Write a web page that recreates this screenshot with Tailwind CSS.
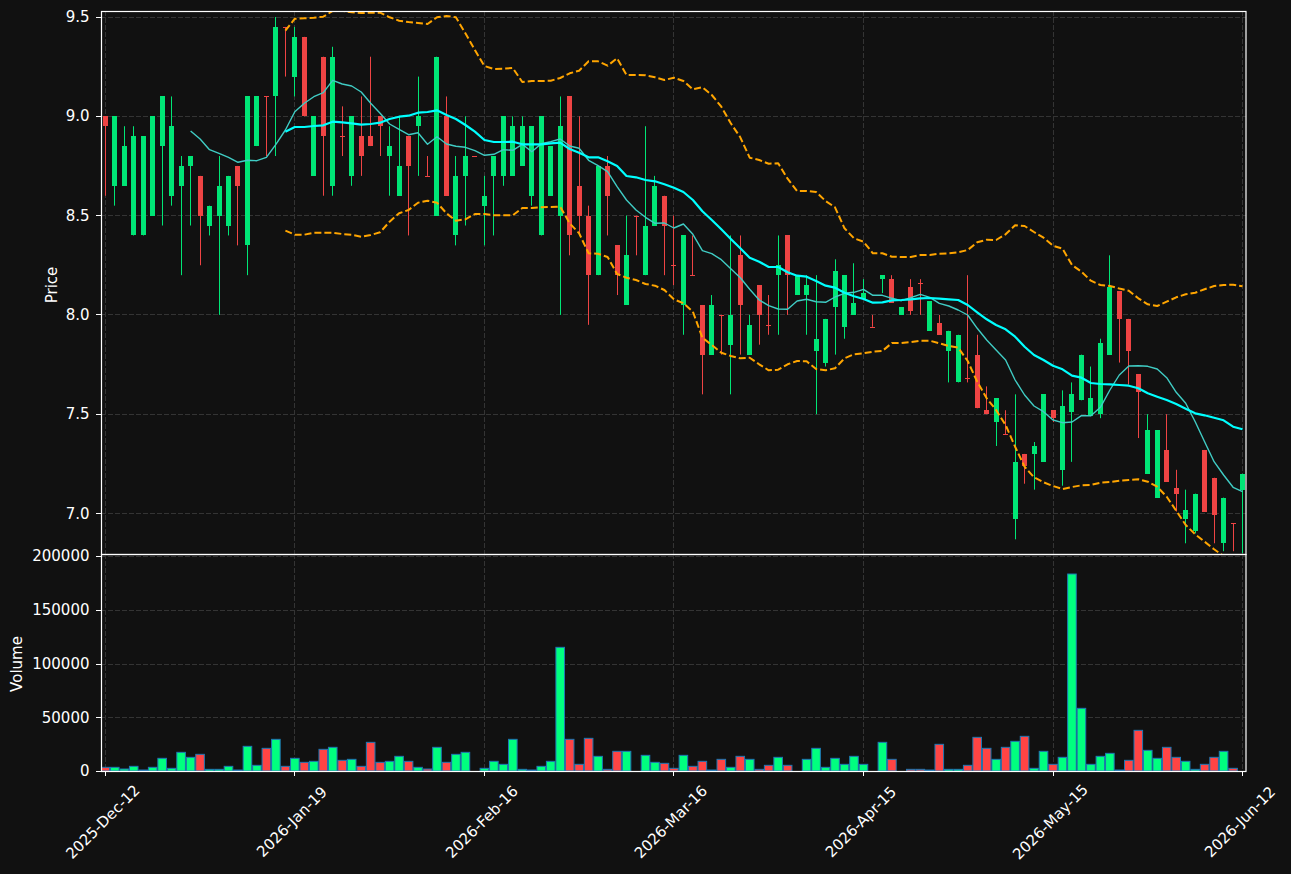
<!DOCTYPE html>
<html lang="en">
<head>
    <meta charset="UTF-8">
    <title>Price and Volume Chart</title>
    <script src="https://cdn.jsdelivr.net/npm/@tailwindcss/browser@4"></script>
</head>
<body class="bg-[#111111] font-['DejaVu_Sans',sans-serif]">
    <div class="flex flex-col w-[1291px] h-[874px] overflow-hidden bg-[#111111]">
        <!-- Price panel -->
        <svg id="pricePanel" class="block shrink-0 w-[1291px] h-[554px] overflow-visible fill-white text-[15px]" viewBox="0 0 1291 554">
            <defs>
                <clipPath id="priceClip"><rect x="101" y="11" width="1145" height="543"></rect></clipPath>
            </defs>
            <g id="priceGrid"></g>
            <g id="candles" clip-path="url(#priceClip)"></g>
            <g id="lines" clip-path="url(#priceClip)"></g>
            <g id="priceFrame"></g>
            <g text-anchor="end" dominant-baseline="central">
                <text x="89.5" y="17">9.5</text>
                <text x="89.5" y="116.3">9.0</text>
                <text x="89.5" y="215.5">8.5</text>
                <text x="89.5" y="314.5">8.0</text>
                <text x="89.5" y="414.3">7.5</text>
                <text x="89.5" y="513.5">7.0</text>
            </g>
            <text text-anchor="middle" dominant-baseline="central" transform="translate(52 285) rotate(-90)">Price</text>
        </svg>

        <!-- Volume panel -->
        <svg id="volumePanel" class="block shrink-0 w-[1291px] h-[320px] overflow-visible fill-white text-[15px]" viewBox="0 554 1291 320">
            <defs>
                <clipPath id="volumeClip"><rect x="101" y="554" width="1145" height="217.5"></rect></clipPath>
            </defs>
            <g id="volumeGrid"></g>
            <g id="bars" clip-path="url(#volumeClip)"></g>
            <g id="volumeFrame"></g>
            <g text-anchor="end" dominant-baseline="central">
                <text x="89.5" y="556">200000</text>
                <text x="89.5" y="610">150000</text>
                <text x="89.5" y="664">100000</text>
                <text x="89.5" y="717.5">50000</text>
                <text x="89.5" y="771">0</text>
            </g>
            <text text-anchor="middle" dominant-baseline="central" transform="translate(17 664) rotate(-90)">Volume</text>
            <g text-anchor="middle" dominant-baseline="central">
                <text transform="translate(103 822) rotate(-45)">2025-Dec-12</text>
                <text transform="translate(292 822) rotate(-45)">2026-Jan-19</text>
                <text transform="translate(482 822) rotate(-45)">2026-Feb-16</text>
                <text transform="translate(671 822) rotate(-45)">2026-Mar-16</text>
                <text transform="translate(861 822) rotate(-45)">2026-Apr-15</text>
                <text transform="translate(1050.5 822) rotate(-45)">2026-May-15</text>
                <text transform="translate(1240 822) rotate(-45)">2026-Jun-12</text>
            </g>
        </svg>
    </div>

    <script>
        const GREEN = '#00e676';
        const RED = '#ef4444';
        const GRID = '#343434';

        // [colour, body top, body bottom, high, low]
        const candles = [
            ['r',9.0,8.95,9.0,8.6],['g',9.0,8.65,9.0,8.55],['g',8.85,8.65,8.95,8.65],['g',8.9,8.4,8.95,8.4],
            ['g',8.9,8.4,8.9,8.4],['g',9.0,8.5,9.0,8.5],['g',9.1,8.85,9.1,8.45],['g',8.95,8.6,9.1,8.55],
            ['g',8.75,8.65,8.8,8.2],['g',8.8,8.75,8.8,8.45],['r',8.7,8.5,8.7,8.25],['g',8.55,8.45,8.55,8.4],
            ['g',8.65,8.5,8.8,8.0],['g',8.7,8.45,8.7,8.4],['r',8.75,8.65,8.75,8.35],['g',9.1,8.35,9.1,8.2],
            ['g',9.1,8.85,9.1,8.85],['r',9.1,9.1,9.1,8.8],['g',9.45,9.1,9.5,8.8],['r',9.45,9.45,9.45,9.2],
            ['g',9.4,9.2,9.45,9.1],['r',9.4,9.0,9.4,9.0],['g',9.0,8.7,9.0,8.7],['r',9.3,8.9,9.3,8.6],
            ['g',9.3,8.65,9.35,8.6],['r',8.9,8.9,9.05,8.8],['g',9.0,8.7,9.0,8.65],['r',8.9,8.8,9.1,8.7],
            ['r',8.9,8.85,9.3,8.85],['r',9.0,8.95,9.0,8.8],['g',8.85,8.8,8.95,8.6],['g',8.75,8.6,9.0,8.6],
            ['r',8.9,8.75,8.9,8.4],['g',9.0,8.95,9.2,8.7],['r',8.7,8.7,8.8,8.7],['g',9.3,8.5,9.3,8.5],
            ['r',9.0,8.6,9.1,8.6],['g',8.7,8.4,8.8,8.35],['g',8.8,8.7,9.0,8.45],['r',8.8,8.8,8.8,8.8],
            ['g',8.6,8.55,8.7,8.35],['g',8.8,8.7,8.8,8.4],['g',9.0,8.7,9.0,8.65],['g',8.95,8.7,9.0,8.7],
            ['g',8.95,8.75,9.0,8.75],['g',8.95,8.6,8.95,8.55],['g',9.0,8.4,9.0,8.4],['g',8.85,8.6,8.85,8.6],
            ['g',8.95,8.5,9.1,8.0],['r',9.1,8.4,9.1,8.3],['r',8.65,8.5,9.0,8.4],['r',8.5,8.2,8.55,7.95],
            ['g',8.75,8.2,8.75,8.2],['r',8.75,8.6,8.8,8.4],['r',8.35,8.2,8.35,8.1],['g',8.3,8.05,8.5,8.05],
            ['r',8.5,8.5,8.5,8.3],['g',8.45,8.2,8.95,8.2],['g',8.65,8.45,8.7,8.45],['r',8.6,8.45,8.6,8.2],
            ['r',8.25,8.25,8.5,8.15],['g',8.4,8.05,8.4,7.9],['r',8.2,8.2,8.4,8.2],['r',8.05,7.8,8.05,7.6],
            ['g',8.05,7.8,8.1,7.8],['r',8.0,8.0,8.0,7.8],['g',8.0,7.85,8.4,7.6],['r',8.3,8.05,8.4,7.8],
            ['g',7.95,7.8,8.0,7.8],['r',8.15,8.0,8.15,7.85],['r',7.95,7.95,8.1,7.9],['g',8.25,8.2,8.4,7.9],
            ['r',8.4,8.2,8.4,8.0],['g',8.2,8.1,8.2,8.1],['g',8.15,8.1,8.2,7.9],['g',7.88,7.82,8.2,7.5],
            ['g',7.98,7.76,7.98,7.74],['g',8.22,8.04,8.28,7.8],['g',8.2,7.94,8.2,7.88],['g',8.06,8.0,8.26,8.0],
            ['g',8.11,8.08,8.18,8.08],['r',7.94,7.94,8.0,7.94],['g',8.2,8.18,8.2,8.11],['r',8.18,8.06,8.2,8.06],
            ['g',8.04,8.0,8.04,8.0],['r',8.14,8.02,8.18,8.0],['r',8.16,8.16,8.18,8.0],['g',8.07,7.92,8.07,7.92],
            ['r',7.96,7.9,8.0,7.9],['g',7.92,7.82,7.92,7.66],['g',7.9,7.66,7.9,7.66],['r',7.68,7.68,8.2,7.66],
            ['r',7.8,7.53,7.9,7.53],['r',7.52,7.5,7.64,7.5],['g',7.58,7.46,7.58,7.34],['r',7.4,7.4,7.52,7.4],
            ['g',7.26,6.97,7.6,6.87],['r',7.3,7.24,7.3,7.15],['g',7.34,7.3,7.36,7.12],['g',7.6,7.26,7.6,7.26],
            ['r',7.52,7.48,7.52,7.46],['g',7.54,7.22,7.62,7.14],['g',7.6,7.51,7.66,7.26],['g',7.8,7.57,7.8,7.57],
            ['g',7.58,7.49,7.74,7.49],['g',7.86,7.5,7.88,7.48],['g',8.14,7.8,8.3,7.8],['r',8.12,7.98,8.12,7.76],
            ['r',7.98,7.82,7.98,7.65],['r',7.7,7.61,7.7,7.38],['g',7.42,7.2,7.5,7.2],['g',7.42,7.08,7.42,7.08],
            ['r',7.32,7.16,7.5,7.16],['r',7.13,7.1,7.22,7.01],['g',7.02,6.97,7.12,6.85],['g',7.1,6.91,7.1,6.9],
            ['r',7.32,7.01,7.32,7.01],['r',7.18,6.99,7.18,6.85],['g',7.08,6.85,7.08,6.81],['r',6.95,6.95,6.95,6.81],
            ['g',7.2,7.12,7.2,6.8]
        ];

        // Bar heights in thirds of a pixel, one per candle
        const volumeHeights = [
            11,11,6,14,3,11,38,8,56,41,50,5,5,14,3,74,17,68,95,14,38,26,29,65,71,32,35,14,86,26,29,44,29,11,6,
            71,26,50,56,0,8,29,20,95,5,3,14,29,371,95,20,98,44,5,59,59,0,47,26,23,8,47,14,29,3,35,11,44,35,5,17,41,17,0,
            35,68,11,38,20,44,20,0,86,35,0,5,5,3,80,5,5,17,101,68,35,71,89,104,8,59,20,41,591,188,20,44,53,3,32,122,62,38,
            71,41,29,5,20,41,59,8,0
        ];

        // Moving averages and bands, pixel y per candle from index 19 (thin line from index 9)
        const maSlow = [131.7,127,127,126,125.3,121.7,122.3,123.3,124.7,124,122.7,119,116.7,115.7,112.7,112,110.3,115,119,125,131.7,140,142,142,141.7,144.3,144.3,144.3,143.3,142.7,149,152.7,157.3,157.3,161.3,166,176,177.3,180,181.3,184.3,187.7,192,200,211.3,220,229.3,239,248.3,257.7,261.7,267,267,272.3,275.7,276.7,281,285.7,287.7,292.7,296.3,299,302.7,302.3,300.3,300,299.3,298.3,298,298.7,299.3,300,305,312.3,319.3,325,329.3,336.7,346.7,355,360,365.7,369.3,375.7,377.7,383,384,384.3,385,385.7,388.3,393.3,396.7,400,404,408.7,413.3,415.3,417.7,420.3,426.7,429.3];
        const maFast = [131,139,149.7,153.3,157.3,162.3,160.3,160.7,157.3,144.3,130,111.7,103.3,96.7,92.7,80.3,84,86,92,103.3,113.3,124,129.3,134.7,132.7,144.3,136.7,144,146.3,147.3,150.7,155.3,154.3,149.7,150.3,144.3,151.7,143.7,141.7,139,146,148.3,160.3,165.7,171.7,186.7,200,210,217.3,223.3,223,228,224,234.3,250.7,253.7,259.7,268.7,277.7,289.3,300,305.7,309,309.3,301,299.3,301.7,302.3,297,293.3,292.3,289.3,295.3,295.3,298.3,300.7,297.7,294.3,297.3,303.3,306,310,315,328.3,340,350,360,380,395,406,411.7,420,422.7,422,415.7,415.7,407.3,390,375,366,365.7,366.3,369,377.7,392.3,403.3,421.7,441.7,461.7,475,487.3,491.7];
        const upperBand = [30.7,18.7,18.3,17.7,16.7,11,10.7,12.3,13,12.7,12.7,17.3,20.7,22,23,24,17.3,16,17.3,33.3,50,66,69,68.7,68,82,81,81,80.7,78,73.3,70.7,61.3,61.3,65.7,58.3,75,75,75.3,77.3,80,77.7,81,89.3,87.3,95,106.7,123.3,137.3,157.7,160,163.7,163.3,178.7,191,191,192,201,207.3,228.3,238.3,241.7,253.3,253.3,256.7,257,257,255,255,253.7,253.3,252.3,250,242.3,239.7,240,234.3,225.3,226,232,237.7,245.7,248.7,265,271.7,280.7,285,286,288.5,290.7,298.3,304.3,306,301.7,297.3,294.3,292.7,289.3,286,285,284.7,286.3];
        const lowerBand = [230.7,234.7,234.7,232.7,232.7,232.7,234,234.7,236.7,235,232.3,221.7,213.3,210,202.7,200.7,202.7,213.3,220.7,219.3,214,214,215.3,215.3,215.3,208,208,207.3,207,206.7,223.3,233.3,253.3,253.7,257,274,277.7,280,284,285.7,290,299.3,303.3,311.7,337.7,345,352.7,356,358.3,357.7,364.3,370.3,369.7,364.3,361,361.3,369,370.3,368.3,358.3,354.3,353.3,351.7,351,343,343,342,340.7,340.7,343.3,346,347.7,361,381.7,398.3,410,425,446.7,466.7,477.3,482.3,486,489,487,485.3,485,482.7,482,480.7,480,479.3,481.7,486.7,496.7,510.7,525,534.3,541.7,549.3,556,565,573.3];

        const xAt = i => 105.3 + 9.477 * i;
        const priceY = p => 17 + (9.5 - p) * 198.6;

        function add(parent, tag, attrs) {
            const node = document.createElementNS('http://www.w3.org/2000/svg', tag);
            Object.keys(attrs).forEach(k => node.setAttribute(k, attrs[k]));
            parent.appendChild(node);
            return node;
        }

        function drawAxes(gridId, frameId, top, bottom, yTicks) {
            const grid = document.getElementById(gridId);
            const frame = document.getElementById(frameId);
            yTicks.forEach(y => {
                const py = Math.floor(y) + 0.5;
                add(grid, 'line', { x1: 101, x2: 1246, y1: py, y2: py, stroke: GRID, 'stroke-dasharray': '5 2' });
                add(frame, 'line', { x1: 96, x2: 101, y1: py, y2: py, stroke: '#fff' });
            });
            [0, 20, 40, 60, 80, 100, 120].forEach(i => {
                const px = Math.floor(xAt(i)) + 0.5;
                add(grid, 'line', { x1: px, x2: px, y1: top, y2: bottom, stroke: GRID, 'stroke-dasharray': '5 2' });
            });
            add(frame, 'rect', { x: 101.5, y: top + 0.5, width: 1144.5, height: bottom - top, fill: 'none', stroke: '#fff', 'stroke-width': 1.2 });
        }

        // Price panel
        drawAxes('priceGrid', 'priceFrame', 11, 554, [17, 116.3, 215.5, 314.5, 414.3, 513.5]);

        const candleGroup = document.getElementById('candles');
        candles.forEach((c, i) => {
            const color = c[0] === 'g' ? GREEN : RED;
            const x = xAt(i);
            const wickX = Math.floor(x) + 0.5;
            add(candleGroup, 'line', { x1: wickX, x2: wickX, y1: priceY(c[3]), y2: priceY(c[4]), stroke: color });
            const top = priceY(c[1]);
            const height = Math.max(priceY(c[2]) - top, 1);
            add(candleGroup, 'rect', { x: x - 2.5, y: top, width: 5, height: height, fill: color, 'shape-rendering': 'crispEdges' });
        });

        function drawLine(values, start, attrs) {
            const points = values.map((y, n) => xAt(start + n).toFixed(1) + ',' + y).join(' ');
            add(document.getElementById('lines'), 'polyline', Object.assign({ points: points, fill: 'none', 'stroke-linejoin': 'round' }, attrs));
        }
        drawLine(maFast, 9, { stroke: '#40ccc4', 'stroke-width': 1.4 });
        drawLine(maSlow, 19, { stroke: '#00ffff', 'stroke-width': 2.2 });
        drawLine(upperBand, 19, { stroke: '#ffa500', 'stroke-width': 2, 'stroke-dasharray': '7 3' });
        drawLine(lowerBand, 19, { stroke: '#ffa500', 'stroke-width': 2, 'stroke-dasharray': '7 3' });

        // Volume panel
        drawAxes('volumeGrid', 'volumeFrame', 554, 771, [556, 610, 664, 717.5]);

        const barGroup = document.getElementById('bars');
        volumeHeights.forEach((h, i) => {
            if (h === 0) return;
            add(barGroup, 'rect', {
                x: xAt(i) - 4.3, y: 771 - h / 3, width: 8.6, height: h / 3,
                fill: candles[i][0] === 'g' ? '#00ff7f' : '#ff4444',
                stroke: '#1f77b4', 'stroke-width': 1
            });
        });

        // Ticks under the volume panel, and the zero tick on its left
        const volumeFrame = document.getElementById('volumeFrame');
        add(volumeFrame, 'line', { x1: 96, x2: 101, y1: 771.5, y2: 771.5, stroke: '#fff' });
        [0, 20, 40, 60, 80, 100, 120].forEach(i => {
            const px = Math.floor(xAt(i)) + 0.5;
            add(volumeFrame, 'line', { x1: px, x2: px, y1: 771, y2: 776, stroke: '#fff' });
        });
    </script>
</body>
</html>
